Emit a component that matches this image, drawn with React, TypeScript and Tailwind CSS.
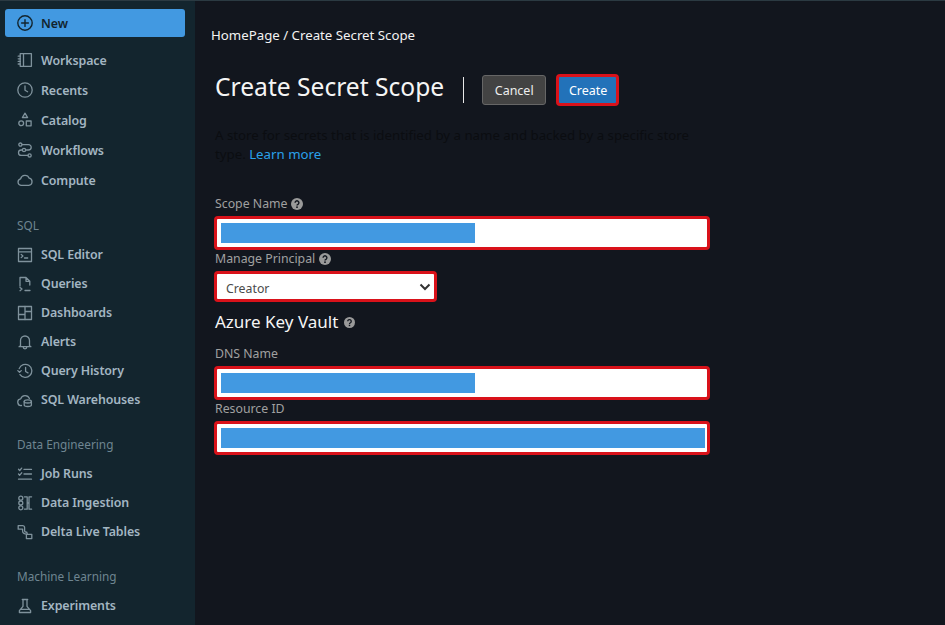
import type { ReactNode } from "react";

const S = { fill: "none", stroke: "currentColor", strokeWidth: 1.3, strokeLinecap: "round", strokeLinejoin: "round" } as const;

function Ico({ children }: { children: ReactNode }) {
  return (
    <svg width="16" height="16" viewBox="0 0 16 16" {...S} className="shrink-0 text-[#7f929c]">
      {children}
    </svg>
  );
}

const icons: Record<string, ReactNode> = {
  workspace: (
    <>
      <rect x="3.2" y="1.7" width="11.2" height="12.6" />
      <path d="M6.5 1.7v12.6M1.2 4.2h2M1.2 6.8h2M1.2 9.4h2M1.2 12h2" />
    </>
  ),
  recents: (
    <>
      <circle cx="8" cy="8" r="7.2" />
      <path d="M8 4v4.3l2.6 1.5" />
    </>
  ),
  catalog: (
    <>
      <path d="M8 1.2l2.6 4.3H5.4z" />
      <circle cx="4.2" cy="11.3" r="2.4" />
      <rect x="9.3" y="9" width="4.8" height="4.8" />
    </>
  ),
  workflows: (
    <>
      <circle cx="3.4" cy="2.6" r="1.6" />
      <circle cx="12.6" cy="13.4" r="1.6" />
      <circle cx="7" cy="8" r="1.6" />
      <path d="M5 2.6h6.5a2.7 2.7 0 0 1 0 5.4H8.6M5.4 8H4.2a2.7 2.7 0 0 0 0 5.4H11" />
    </>
  ),
  compute: <path d="M4.2 13.3a3.3 3.3 0 0 1-.4-6.5 4.5 4.5 0 0 1 8.6-.6 3.6 3.6 0 0 1-.4 7.1z" transform="translate(-.2 0)" />,
  editor: (
    <>
      <rect x="1.5" y="1.5" width="13" height="13" />
      <path d="M1.5 4.8h13M4.2 7.4l1.7 1.6-1.7 1.6M7.5 11h3.2" />
    </>
  ),
  queries: <path d="M3 10V1.5h6l3.8 3.8V9M9 1.5v3.8h3.8M3 11.5l2 1.6-2 1.6M8 14.5h5" />,
  dashboards: (
    <>
      <rect x="1.5" y="1.5" width="13" height="13" />
      <path d="M1.5 9.5h6.5M8 1.5v13M8 6.5h6.5" />
    </>
  ),
  alerts: <path d="M3.5 11.7V6.5a4.5 4.5 0 0 1 9 0v5.2l1.5 1H2zM6.2 13a1.8 1.8 0 0 0 3.6 0" />,
  history: (
    <>
      <path d="M2.2 5.6A6.5 6.5 0 1 1 3 11.6M.8 7.6l1.7 1.7 1.8-1.7" />
      <path d="M8.6 4.5v4l2.4 1.4" />
    </>
  ),
  warehouses: (
    <>
      <path d="M4.5 13.5a3.3 3.3 0 0 1-.8-6.6 4.6 4.6 0 0 1 8.7-.4" />
      <ellipse cx="10.8" cy="9.4" rx="3.6" ry="1.6" />
      <path d="M7.2 9.4v3.6c0 .9 1.6 1.5 3.6 1.5s3.6-.6 3.6-1.5V9.4" />
    </>
  ),
  jobs: <path d="M1.5 3.3l1.2 1.2 2-2.4M1.5 8l1.2 1.2 2-2.4M7 3.4h7.5M7 8h7.5M1.5 13.2h13" />,
  ingestion: (
    <>
      <circle cx="3.8" cy="3.2" r="2" />
      <circle cx="3.8" cy="8" r="2" />
      <circle cx="3.8" cy="12.8" r="2" />
      <path d="M7.4 1.8h2.8v12.4H7.4M10.2 8h1.8M14.6 1.8h-2.6v12.4h2.6" />
    </>
  ),
  delta: <path d="M1.2 1.6h4.4a2 2 0 0 1 2 2v3.2c0 .7.5 1.2 1.2 1.2.9 0 1.4.6 1.4 1.4v1h4.6v4.2H9.4v-3.8c0-.6-.4-1-1-1-1.6 0-2.8-1.1-2.8-2.8V5.2H1.2z" />,
  experiments: <path d="M5.3 1.5h5.4M6 1.5v6.8L2.4 12.6v1.9h11.2v-1.9L10 8.3V1.5M3.5 11.3h9" />,
};

function Group({ title, items, mt, rowH }: { title?: string; items: [string, string][]; mt: string; rowH: string }) {
  return (
    <div className={mt}>
      {title && <div className="h-[24px] pl-[17px] text-[11.8px] leading-[18px] text-[#6f8591]">{title}</div>}
      <div className={`flex flex-col ${rowH}`}>
        {items.map(([icon, label]) => (
          <div key={label} className="flex h-full items-center gap-[8px] pl-[17px]">
            <Ico>{icons[icon]}</Ico>
            <span className="pt-[2px] text-[12.4px] font-semibold tracking-[-0.1px] text-[#a3b6c2]">{label}</span>
          </div>
        ))}
      </div>
    </div>
  );
}

function Help({ size = 12 }: { size?: number }) {
  return (
    <svg width={size} height={size} viewBox="0 0 12 12" className="shrink-0">
      <circle cx="6" cy="6" r="6" fill="#9a9a9a" />
      <path d="M4.1 4.7a1.9 1.9 0 1 1 2.9 1.6c-.7.4-1 .7-1 1.3" fill="none" stroke="#12161e" strokeWidth="1.4" />
      <rect x="5.2" y="8.4" width="1.6" height="1.6" fill="#12161e" />
    </svg>
  );
}

function Label({ text, help }: { text: string; help?: boolean }) {
  return (
    <div className="ml-px flex h-[18px] items-center gap-[4px] text-[12.3px] text-[#a0a0a0]">
      {text}
      {help && <Help />}
    </div>
  );
}

function Field({ label, fill, help }: { label: string; fill: string; help?: boolean }) {
  return (
    <div>
      <Label text={label} help={help} />
      <div className="mt-[3px] h-[34px] w-[496px] rounded-[4px] border-[3px] border-[#d9121a] bg-white py-[4px] pl-[4px] pr-[2px]">
        <div className={`h-[20px] bg-[#4299e1] ${fill}`} />
      </div>
    </div>
  );
}

export default function App() {
  return (
    <div className="flex h-[625px] w-[945px] flex-col overflow-hidden bg-[#12161e] font-['Noto_Sans',sans-serif]">
      <div className="h-px w-full shrink-0 bg-[#2b3a42]" />
      <div className="flex min-h-0 flex-1">
        <aside className="h-full w-[195px] shrink-0 overflow-hidden bg-[#13252e]">
          <div className="mx-[5px] mt-[8px] flex h-[28px] w-[180px] items-center gap-[8px] rounded-[3px] bg-[#4299e1] pl-[12px] text-[#13252e]">
            <svg width="16" height="16" viewBox="0 0 16 16" fill="none" stroke="currentColor" strokeWidth="1.4" strokeLinecap="round">
              <circle cx="8" cy="8" r="7.2" />
              <path d="M8 4.6v6.8M4.6 8h6.8" />
            </svg>
            <span className="pt-[2px] text-[12.4px] font-semibold">New</span>
          </div>
          <Group
            mt="mt-[8px]"
            rowH="h-[150px]"
            items={[
              ["workspace", "Workspace"],
              ["recents", "Recents"],
              ["catalog", "Catalog"],
              ["workflows", "Workflows"],
              ["compute", "Compute"],
            ]}
          />
          <Group
            title="SQL"
            mt="mt-[21px]"
            rowH="h-[174px]"
            items={[
              ["editor", "SQL Editor"],
              ["queries", "Queries"],
              ["dashboards", "Dashboards"],
              ["alerts", "Alerts"],
              ["history", "Query History"],
              ["warehouses", "SQL Warehouses"],
            ]}
          />
          <Group
            title="Data Engineering"
            mt="mt-[21px]"
            rowH="h-[87px]"
            items={[
              ["jobs", "Job Runs"],
              ["ingestion", "Data Ingestion"],
              ["delta", "Delta Live Tables"],
            ]}
          />
          <Group title="Machine Learning" mt="mt-[21px]" rowH="h-[29px]" items={[["experiments", "Experiments"]]} />
        </aside>

        <main className="min-w-0 flex-1 pl-[16px] pt-[25px]">
          <div className="h-[18px] text-[13.25px] leading-[18px] text-[#f2f2f2]">HomePage / Create Secret Scope</div>

          <div className="ml-[4px] mt-[30px] flex h-[32px] items-center">
            <h1 className="pb-[6px] text-[24.6px] leading-[32px] text-[#f5f5f5]">Create Secret Scope</h1>
            <div className="ml-[19px] h-[26px] w-px bg-[#e8e8e8]" />
            <button className="ml-[18px] h-[30px] w-[64px] rounded-[3px] border border-[#666] bg-[#434343] pt-[2px] text-[12.5px] text-[#eee]">Cancel</button>
            <button className="ml-[10px] h-[32px] w-[63px] rounded-[4px] border-[3px] border-[#d9121a] bg-[#2272b9] pl-px pt-[2px] text-[12.5px] text-white">Create</button>
          </div>

          <p className="ml-[4px] mt-[20px] w-[490px] text-[13.25px] leading-[19px] text-[#0b0d11]">
            A store for secrets that is identified by a name and backed by a specific store
            <br />
            type. <span className="text-[#2aa1ea]">Learn more</span>
          </p>

          <div className="ml-[3px] mt-[31px]">
            <Field label="Scope Name" fill="w-[254px]" help />
            <Label text="Manage Principal" help />
            <div className="mt-[3px] flex h-[31px] w-[223px] items-center justify-between rounded-[4px] border-[3px] border-[#d9121a] bg-white pl-[9px] pr-[3px] pt-[5px] text-[12.3px] text-[#4a4a4a]">
              Creator
              <svg width="12" height="8" viewBox="0 0 12 8" fill="none" stroke="#333" strokeWidth="2" className="-mt-[5px]">
                <path d="M1.5 1.5L6 6l4.5-4.5" />
              </svg>
            </div>

            <div className="ml-px mt-[9px] flex h-[22px] items-center gap-[6px] text-[17px] text-[#f5f5f5]">
              Azure Key Vault
              <Help size={11} />
            </div>

            <div className="mt-[12px]">
              <Field label="DNS Name" fill="w-[254px]" />
            </div>
            <Field label="Resource ID" fill="w-[484px]" />
          </div>
        </main>
      </div>
    </div>
  );
}
